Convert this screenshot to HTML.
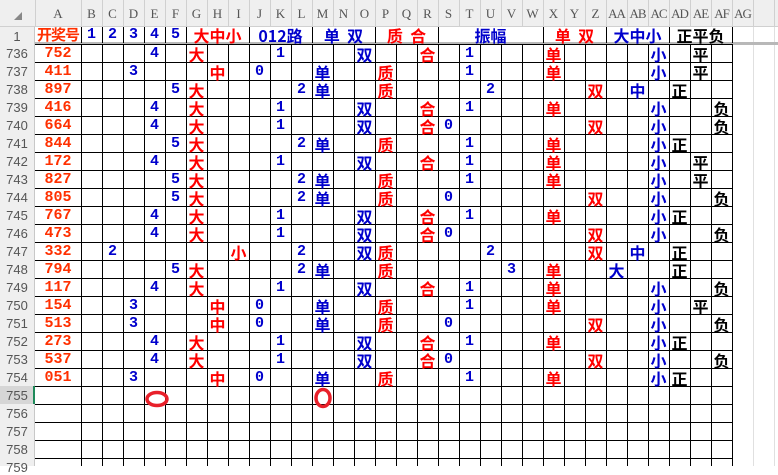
<!DOCTYPE html>
<html><head><meta charset="utf-8"><style>
*{margin:0;padding:0;box-sizing:border-box}
body{width:778px;height:466px;overflow:hidden;background:#fff;position:relative;font-family:"Liberation Mono","Noto Sans CJK SC",monospace}
.ab{position:absolute}
#colhdr{left:0;top:0;width:778px;height:27px;background:#efefef;border-bottom:1px solid #d0d0d0}
#rowhdr{left:0;top:27px;width:35px;height:439px;background:#efefef;border-right:1px solid #c8c8c8}
.cl{position:absolute;top:6px;width:21px;text-align:center;font:13px "Liberation Serif",serif;color:#555;white-space:nowrap}
.rl{position:absolute;left:0;width:34px;text-align:center;font:13px "Liberation Sans",sans-serif;color:#555}
.r{position:absolute;left:0;width:778px;height:18px}
.r span{position:absolute;top:1px;height:18px;line-height:18px;text-align:center;font-weight:bold;font-size:15px;width:21px;white-space:nowrap;overflow:visible}
.r span.A{left:35px;width:46px;color:#ff3000}
.b{color:#0000cc}.d{color:#ff0000}.k{color:#000}
.h{font-family:"Noto Sans CJK SC",sans-serif;font-size:16px!important}
</style></head><body>
<div id="colhdr" class="ab"></div>
<div class="ab" style="left:81px;top:0;width:697px;height:27px;background:repeating-linear-gradient(to right,#d0d0d0 0 1px,transparent 1px 21px)"></div>
<div class="ab" style="left:35px;top:0;width:1px;height:27px;background:#d0d0d0"></div>
<div class="ab" style="left:14px;top:12px;width:0;height:0;border-left:8px solid transparent;border-bottom:8px solid #888"></div>
<div class="cl" style="left:35px;width:46px">A</div>
<div class="cl" style="left:81px">B</div><div class="cl" style="left:102px">C</div><div class="cl" style="left:123px">D</div><div class="cl" style="left:144px">E</div><div class="cl" style="left:165px">F</div><div class="cl" style="left:186px">G</div><div class="cl" style="left:207px">H</div><div class="cl" style="left:228px">I</div><div class="cl" style="left:249px">J</div><div class="cl" style="left:270px">K</div><div class="cl" style="left:291px">L</div><div class="cl" style="left:312px">M</div><div class="cl" style="left:333px">N</div><div class="cl" style="left:354px">O</div><div class="cl" style="left:375px">P</div><div class="cl" style="left:396px">Q</div><div class="cl" style="left:417px">R</div><div class="cl" style="left:438px">S</div><div class="cl" style="left:459px">T</div><div class="cl" style="left:480px">U</div><div class="cl" style="left:501px">V</div><div class="cl" style="left:522px">W</div><div class="cl" style="left:543px">X</div><div class="cl" style="left:564px">Y</div><div class="cl" style="left:585px">Z</div><div class="cl" style="left:606px;letter-spacing:-1px">AA</div><div class="cl" style="left:627px;letter-spacing:-1px">AB</div><div class="cl" style="left:648px;letter-spacing:-1px">AC</div><div class="cl" style="left:669px;letter-spacing:-1px">AD</div><div class="cl" style="left:690px;letter-spacing:-1px">AE</div><div class="cl" style="left:711px;letter-spacing:-1px">AF</div><div class="cl" style="left:732px;letter-spacing:-1px">AG</div>

<div id="rowhdr" class="ab"></div>
<div class="ab" style="left:0;top:386px;width:35px;height:18px;background:#d6d6d6;border-right:2px solid #1e8a5a"></div>
<div class="ab" style="left:733px;top:27px;width:45px;height:439px;background:repeating-linear-gradient(to right,transparent 0 20px,#e0e0e0 20px 21px)"></div>
<div class="ab" style="left:35px;top:42px;width:743px;height:3px;background:#b8b8b8"></div>
<div class="ab" style="left:81px;top:27px;width:1px;height:16px;background:#000"></div><div class="ab" style="left:102px;top:27px;width:1px;height:16px;background:#000"></div><div class="ab" style="left:123px;top:27px;width:1px;height:16px;background:#000"></div><div class="ab" style="left:144px;top:27px;width:1px;height:16px;background:#000"></div><div class="ab" style="left:165px;top:27px;width:1px;height:16px;background:#000"></div><div class="ab" style="left:186px;top:27px;width:1px;height:16px;background:#000"></div><div class="ab" style="left:249px;top:27px;width:1px;height:16px;background:#000"></div><div class="ab" style="left:312px;top:27px;width:1px;height:16px;background:#000"></div><div class="ab" style="left:375px;top:27px;width:1px;height:16px;background:#000"></div><div class="ab" style="left:438px;top:27px;width:1px;height:16px;background:#000"></div><div class="ab" style="left:543px;top:27px;width:1px;height:16px;background:#000"></div><div class="ab" style="left:606px;top:27px;width:1px;height:16px;background:#000"></div><div class="ab" style="left:669px;top:27px;width:1px;height:16px;background:#000"></div><div class="ab" style="left:732px;top:27px;width:1px;height:16px;background:#000"></div>
<div class="ab" style="left:81px;top:45px;width:653px;height:421px;background:repeating-linear-gradient(to right,#000 0 1px,transparent 1px 21px)"></div>
<div class="ab" style="left:35px;top:44px;width:698px;height:422px;background:repeating-linear-gradient(to bottom,#000 0 1px,transparent 1px 18px)"></div>

<div class="rl" style="top:29px">1</div>
<div class="rl" style="top:46px">736</div><div class="rl" style="top:64px">737</div><div class="rl" style="top:82px">738</div><div class="rl" style="top:100px">739</div><div class="rl" style="top:118px">740</div><div class="rl" style="top:136px">741</div><div class="rl" style="top:154px">742</div><div class="rl" style="top:172px">743</div><div class="rl" style="top:190px">744</div><div class="rl" style="top:208px">745</div><div class="rl" style="top:226px">746</div><div class="rl" style="top:244px">747</div><div class="rl" style="top:262px">748</div><div class="rl" style="top:280px">749</div><div class="rl" style="top:298px">750</div><div class="rl" style="top:316px">751</div><div class="rl" style="top:334px">752</div><div class="rl" style="top:352px">753</div><div class="rl" style="top:370px">754</div><div class="rl" style="top:388px">755</div><div class="rl" style="top:406px">756</div><div class="rl" style="top:424px">757</div><div class="rl" style="top:442px">758</div><div class="rl" style="top:460px">759</div>

<div class="r" style="top:25px">
<span class="A h" style="color:#ff3000;font-size:15px!important;letter-spacing:-1px">开奖号</span>
<span class="b" style="left:81px">1</span><span class="b" style="left:102px">2</span><span class="b" style="left:123px">3</span><span class="b" style="left:144px">4</span><span class="b" style="left:165px">5</span>
<span class="d h" style="left:186px;width:63px">大中小</span>
<span class="b h" style="left:249px;width:63px">012路</span>
<span class="b h" style="left:312px;width:63px">单&nbsp;&nbsp;双</span>
<span class="d h" style="left:375px;width:63px">质&nbsp;&nbsp;合</span>
<span class="b h" style="left:438px;width:105px">振幅</span>
<span class="d h" style="left:543px;width:63px">单&nbsp;&nbsp;双</span>
<span class="b h" style="left:606px;width:63px">大中小</span>
<span class="k h" style="left:669px;width:63px">正平负</span>
</div>

<div class="r" style="top:44px"><span class="A">752</span><span class="b" style="left:144px">4</span><span class="d h" style="left:186px">大</span><span class="b" style="left:270px">1</span><span class="b h" style="left:354px">双</span><span class="d h" style="left:417px">合</span><span class="b" style="left:459px">1</span><span class="d h" style="left:543px">单</span><span class="b h" style="left:648px">小</span><span class="k h" style="left:690px">平</span></div>
<div class="r" style="top:62px"><span class="A">411</span><span class="b" style="left:123px">3</span><span class="d h" style="left:207px">中</span><span class="b" style="left:249px">0</span><span class="b h" style="left:312px">单</span><span class="d h" style="left:375px">质</span><span class="b" style="left:459px">1</span><span class="d h" style="left:543px">单</span><span class="b h" style="left:648px">小</span><span class="k h" style="left:690px">平</span></div>
<div class="r" style="top:80px"><span class="A">897</span><span class="b" style="left:165px">5</span><span class="d h" style="left:186px">大</span><span class="b" style="left:291px">2</span><span class="b h" style="left:312px">单</span><span class="d h" style="left:375px">质</span><span class="b" style="left:480px">2</span><span class="d h" style="left:585px">双</span><span class="b h" style="left:627px">中</span><span class="k h" style="left:669px">正</span></div>
<div class="r" style="top:98px"><span class="A">416</span><span class="b" style="left:144px">4</span><span class="d h" style="left:186px">大</span><span class="b" style="left:270px">1</span><span class="b h" style="left:354px">双</span><span class="d h" style="left:417px">合</span><span class="b" style="left:459px">1</span><span class="d h" style="left:543px">单</span><span class="b h" style="left:648px">小</span><span class="k h" style="left:711px">负</span></div>
<div class="r" style="top:116px"><span class="A">664</span><span class="b" style="left:144px">4</span><span class="d h" style="left:186px">大</span><span class="b" style="left:270px">1</span><span class="b h" style="left:354px">双</span><span class="d h" style="left:417px">合</span><span class="b" style="left:438px">0</span><span class="d h" style="left:585px">双</span><span class="b h" style="left:648px">小</span><span class="k h" style="left:711px">负</span></div>
<div class="r" style="top:134px"><span class="A">844</span><span class="b" style="left:165px">5</span><span class="d h" style="left:186px">大</span><span class="b" style="left:291px">2</span><span class="b h" style="left:312px">单</span><span class="d h" style="left:375px">质</span><span class="b" style="left:459px">1</span><span class="d h" style="left:543px">单</span><span class="b h" style="left:648px">小</span><span class="k h" style="left:669px">正</span></div>
<div class="r" style="top:152px"><span class="A">172</span><span class="b" style="left:144px">4</span><span class="d h" style="left:186px">大</span><span class="b" style="left:270px">1</span><span class="b h" style="left:354px">双</span><span class="d h" style="left:417px">合</span><span class="b" style="left:459px">1</span><span class="d h" style="left:543px">单</span><span class="b h" style="left:648px">小</span><span class="k h" style="left:690px">平</span></div>
<div class="r" style="top:170px"><span class="A">827</span><span class="b" style="left:165px">5</span><span class="d h" style="left:186px">大</span><span class="b" style="left:291px">2</span><span class="b h" style="left:312px">单</span><span class="d h" style="left:375px">质</span><span class="b" style="left:459px">1</span><span class="d h" style="left:543px">单</span><span class="b h" style="left:648px">小</span><span class="k h" style="left:690px">平</span></div>
<div class="r" style="top:188px"><span class="A">805</span><span class="b" style="left:165px">5</span><span class="d h" style="left:186px">大</span><span class="b" style="left:291px">2</span><span class="b h" style="left:312px">单</span><span class="d h" style="left:375px">质</span><span class="b" style="left:438px">0</span><span class="d h" style="left:585px">双</span><span class="b h" style="left:648px">小</span><span class="k h" style="left:711px">负</span></div>
<div class="r" style="top:206px"><span class="A">767</span><span class="b" style="left:144px">4</span><span class="d h" style="left:186px">大</span><span class="b" style="left:270px">1</span><span class="b h" style="left:354px">双</span><span class="d h" style="left:417px">合</span><span class="b" style="left:459px">1</span><span class="d h" style="left:543px">单</span><span class="b h" style="left:648px">小</span><span class="k h" style="left:669px">正</span></div>
<div class="r" style="top:224px"><span class="A">473</span><span class="b" style="left:144px">4</span><span class="d h" style="left:186px">大</span><span class="b" style="left:270px">1</span><span class="b h" style="left:354px">双</span><span class="d h" style="left:417px">合</span><span class="b" style="left:438px">0</span><span class="d h" style="left:585px">双</span><span class="b h" style="left:648px">小</span><span class="k h" style="left:711px">负</span></div>
<div class="r" style="top:242px"><span class="A">332</span><span class="b" style="left:102px">2</span><span class="d h" style="left:228px">小</span><span class="b" style="left:291px">2</span><span class="b h" style="left:354px">双</span><span class="d h" style="left:375px">质</span><span class="b" style="left:480px">2</span><span class="d h" style="left:585px">双</span><span class="b h" style="left:627px">中</span><span class="k h" style="left:669px">正</span></div>
<div class="r" style="top:260px"><span class="A">794</span><span class="b" style="left:165px">5</span><span class="d h" style="left:186px">大</span><span class="b" style="left:291px">2</span><span class="b h" style="left:312px">单</span><span class="d h" style="left:375px">质</span><span class="b" style="left:501px">3</span><span class="d h" style="left:543px">单</span><span class="b h" style="left:606px">大</span><span class="k h" style="left:669px">正</span></div>
<div class="r" style="top:278px"><span class="A">117</span><span class="b" style="left:144px">4</span><span class="d h" style="left:186px">大</span><span class="b" style="left:270px">1</span><span class="b h" style="left:354px">双</span><span class="d h" style="left:417px">合</span><span class="b" style="left:459px">1</span><span class="d h" style="left:543px">单</span><span class="b h" style="left:648px">小</span><span class="k h" style="left:711px">负</span></div>
<div class="r" style="top:296px"><span class="A">154</span><span class="b" style="left:123px">3</span><span class="d h" style="left:207px">中</span><span class="b" style="left:249px">0</span><span class="b h" style="left:312px">单</span><span class="d h" style="left:375px">质</span><span class="b" style="left:459px">1</span><span class="d h" style="left:543px">单</span><span class="b h" style="left:648px">小</span><span class="k h" style="left:690px">平</span></div>
<div class="r" style="top:314px"><span class="A">513</span><span class="b" style="left:123px">3</span><span class="d h" style="left:207px">中</span><span class="b" style="left:249px">0</span><span class="b h" style="left:312px">单</span><span class="d h" style="left:375px">质</span><span class="b" style="left:438px">0</span><span class="d h" style="left:585px">双</span><span class="b h" style="left:648px">小</span><span class="k h" style="left:711px">负</span></div>
<div class="r" style="top:332px"><span class="A">273</span><span class="b" style="left:144px">4</span><span class="d h" style="left:186px">大</span><span class="b" style="left:270px">1</span><span class="b h" style="left:354px">双</span><span class="d h" style="left:417px">合</span><span class="b" style="left:459px">1</span><span class="d h" style="left:543px">单</span><span class="b h" style="left:648px">小</span><span class="k h" style="left:669px">正</span></div>
<div class="r" style="top:350px"><span class="A">537</span><span class="b" style="left:144px">4</span><span class="d h" style="left:186px">大</span><span class="b" style="left:270px">1</span><span class="b h" style="left:354px">双</span><span class="d h" style="left:417px">合</span><span class="b" style="left:438px">0</span><span class="d h" style="left:585px">双</span><span class="b h" style="left:648px">小</span><span class="k h" style="left:711px">负</span></div>
<div class="r" style="top:368px"><span class="A">051</span><span class="b" style="left:123px">3</span><span class="d h" style="left:207px">中</span><span class="b" style="left:249px">0</span><span class="b h" style="left:312px">单</span><span class="d h" style="left:375px">质</span><span class="b" style="left:459px">1</span><span class="d h" style="left:543px">单</span><span class="b h" style="left:648px">小</span><span class="k h" style="left:669px">正</span></div>

<svg class="ab" style="left:0;top:0" width="778" height="466">
<ellipse cx="157" cy="399" rx="10" ry="6.5" fill="none" stroke="#e8202a" stroke-width="3.5"/>
<ellipse cx="323" cy="398" rx="7" ry="8.5" fill="none" stroke="#e8202a" stroke-width="3.5"/>
</svg>
</body></html>
